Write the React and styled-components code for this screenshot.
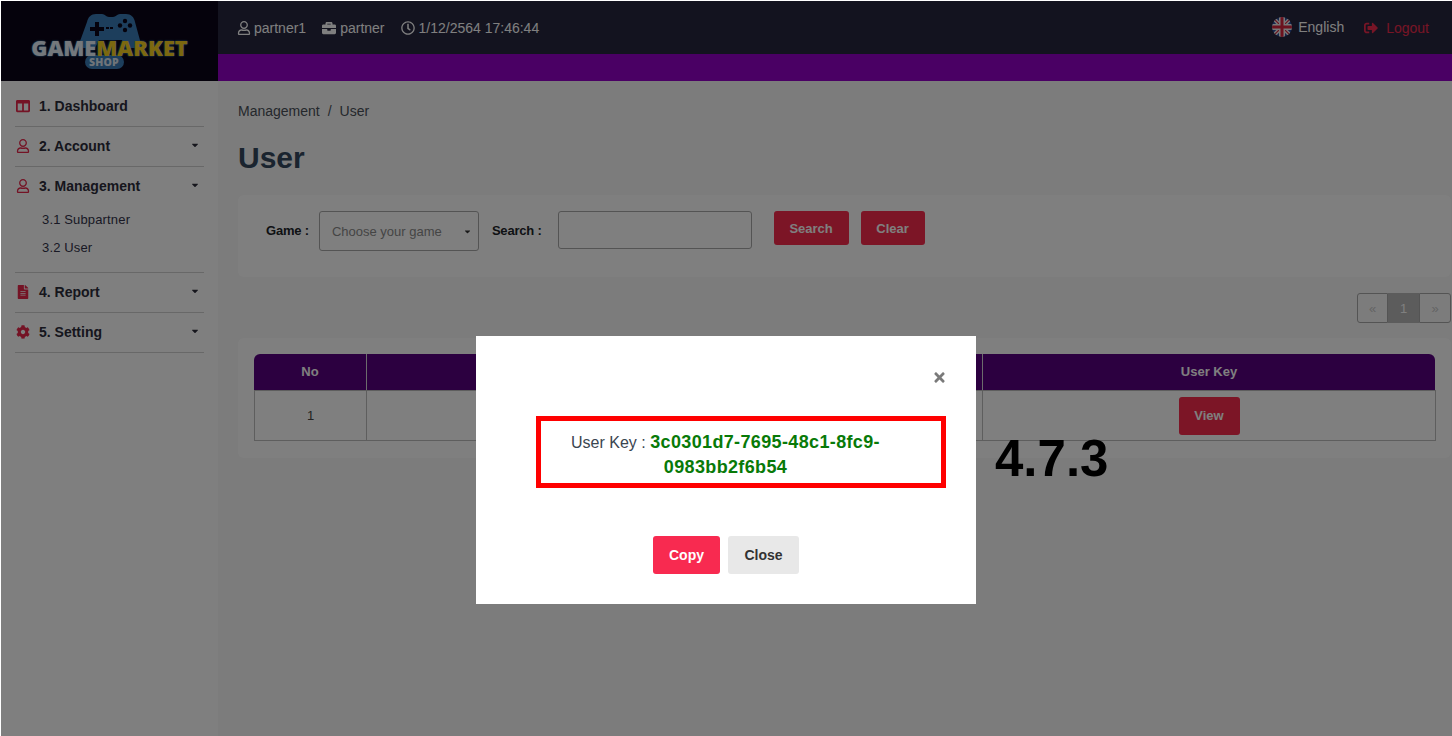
import React from "react";
import styled, { createGlobalStyle } from "styled-components";
import { FaRegUser, FaBriefcase, FaRegClock, FaSignOutAlt, FaColumns, FaFileAlt, FaCog, FaCaretDown, FaTimes } from "react-icons/fa";

const Global = createGlobalStyle`
  html, body { margin: 0; padding: 0; height: 100%; overflow: hidden; }
  body { font-family: "Liberation Sans", Arial, sans-serif; background: #fafafa; color: #212529; }
  * { box-sizing: border-box; }
`;
const Page = styled.div`
  position: relative; width: 1452px; height: 736px; display: flex; flex-direction: column;
  border-top: 1px solid #fff; border-left: 1px solid #fff; overflow: hidden;
`;
const Top = styled.header`display: flex; height: 80px; flex: none;`;
const LogoBox = styled.div`
  width: 217px; flex: none; background: #0a0518; display: flex; align-items: center; justify-content: center;
`;
const Logo = styled.div`position: relative; width: 160px; height: 58px; display: flex; flex-direction: column; align-items: center;`;
const LogoPad = styled.svg`position: absolute; top: 2px; left: 48px; width: 65px; height: 34px;`;
const LogoWords = styled.div`
  position: absolute; top: 30px; left: 0; width: 160px; text-align: center; white-space: nowrap;
  font: 800 21.8px "Open Sans", "Liberation Sans", sans-serif; line-height: 11px;
  text-shadow: 0 0 2px #3b82c0, 0 0 1px #3b82c0;
`;
const Word = styled.span`color: ${p => p.$c};`;
const LogoShop = styled.div`
  position: absolute; top: 43px; left: 55px; width: 39px; height: 14px; border-radius: 7px; background: #3a7cb8;
  color: #dfe8f2; font: 800 10.5px/15px "Open Sans", sans-serif; text-align: center; letter-spacing: .2px;
`;
const TopRight = styled.div`flex: 1; display: flex; flex-direction: column;`;
const InfoBar = styled.div`
  height: 53px; background: #26263e; display: flex; align-items: center; padding: 0 23px 0 19px; color: #fff; font-size: 14px; gap: 16px;
`;
const Info = styled.span`display: inline-flex; align-items: center; gap: ${p => p.$g || 4}px; svg { font-size: 14px; }`;
const Spacer = styled.div`flex: 1;`;
const Lang = styled.span`display: inline-flex; align-items: center; gap: 6px; margin-right: 4px; margin-top: -1px;`;
const Logout = styled.span`display: inline-flex; align-items: center; gap: 8px; color: #ee2a4c; margin-top: 1px; svg { font-size: 14px; }`;
const PurpleBar = styled.div`height: 27px; background: #9400c8;`;

const Body = styled.div`flex: 1; display: flex; min-height: 0;`;
const Side = styled.aside`width: 217px; flex: none; background: #ffffff; padding: 6px 14px 0;`;
const MenuRow = styled.div`
  height: 39px; display: flex; align-items: center; font-size: 14px; font-weight: 700; color: #2c2c3a; padding-bottom: 2px;
`;
const MenuIcon = styled.span`width: 24px; flex: none; display: flex; color: #e8274a; font-size: 14px; padding-left: 1px;`;
const MenuCaret = styled.span`margin-left: auto; font-size: 10px; display: flex; padding-right: 4px; margin-top: -1px; color: #2c2c3a;`;
const MenuGroup = styled.div`border-bottom: 1px solid #d0d0d0;`;
const SubList = styled.div`display: flex; flex-direction: column; margin-top: -1px; padding: 0 0 11px 27px;`;
const SubItem = styled.div`height: 28px; display: flex; align-items: center; font-size: 13px; letter-spacing: .15px; color: #33334a;`;

const Main = styled.main`flex: 1; background: #f9f9f9; padding: 21px 1px 0 20px; min-width: 0;`;
const Crumbs = styled.div`font-size: 14px; color: #4a5058; display: flex; gap: 8px; line-height: 18px;`;
const Title = styled.h1`margin: 20px 0 19px; font-size: 30px; line-height: 36px; font-weight: 700; color: #34495e;`;
const Card = styled.section`background: #ffffff; border-radius: 6px;`;
const Filter = styled(Card)`height: 82px; padding: 16px 28px 0; display: flex; align-items: flex-start; font-size: 13px;`;
const Label = styled.label`font-weight: 700; color: #212529; margin: 12px ${p => p.$mr}px 0 0; line-height: 15px; white-space: nowrap; letter-spacing: -.2px;`;
const Select = styled.div`
  width: 160px; height: 40px; border: 1px solid #a8a8a8; border-radius: 3px; color: #8a8a8a; display: flex; align-items: center;
  padding: 0 6px 0 12px; justify-content: space-between; margin-right: 13px; font-size: 13px;
  svg { font-size: 9px; color: #333; }
`;
const TextInput = styled.div`width: 194px; height: 38px; border: 1px solid #a8a8a8; border-radius: 3px; margin-right: 22px;`;
const RedBtn = styled.button`
  height: ${p => p.$h || 34}px; width: ${p => p.$w}px; margin-left: ${p => p.$ml || 0}px; background: #f82a4c; border: none; border-radius: 3px; color: #fff;
  font: 700 13px "Liberation Sans", sans-serif; padding: 0;
`;
const PagerRow = styled.div`display: flex; justify-content: flex-end; margin: 16px 0 15px 0; height: 30px;`;
const PagerCell = styled.div`
  width: ${p => p.$w}px; height: 30px; display: flex; align-items: center; justify-content: center; font-size: 13px;
  color: ${p => p.$on ? "#fff" : "#c8c8c8"}; background: ${p => p.$on ? "#b8b8b8" : "transparent"};
  border: ${p => p.$on ? "none" : "1px solid #a8a8a8"};
  border-radius: ${p => p.$r};
`;
const TableCard = styled(Card)`padding: 16px; height: 120px;`;
const TableHead = styled.div`display: grid; grid-template-columns: 113px 1fr 452px; height: 36px; background: #580080; border-radius: 6px 6px 0 0; color: #fff; font-size: 13px; font-weight: 700;`;
const TH = styled.div`display: flex; align-items: center; justify-content: center; border-right: ${p => p.$last ? "none" : "1px solid #d8d8d8"}; padding-bottom: 2px;`;
const TableRow = styled.div`display: grid; grid-template-columns: 112px 1fr 452px; height: 51px; margin-right: -1px; border: 1px solid #bdbdbd; font-size: 13px; color: #444;`;
const TD = styled.div`display: flex; align-items: center; justify-content: center; border-right: ${p => p.$last ? "none" : "1px solid #bdbdbd"};`;

const Overlay = styled.div`position: absolute; inset: -1px 0 0 -1px; background: rgba(0,0,0,.5); display: flex; justify-content: center; align-items: flex-start;`;
const Modal = styled.div`
  margin-top: 336px; width: 500px; height: 268px; background: #fff; padding: 31px 30px 0 60px; display: flex; flex-direction: column; position: relative;
`;
const CloseX = styled.button`align-self: flex-end; border: none; background: none; padding: 0; color: #7a7a7a; height: 20px; display: flex; align-items: center; font-size: 15px; margin: 0 0 29px; transform: translateX(1px);`;
const KeyBox = styled.div`
  width: 410px; height: 72px; border: 5px solid #ff0000; padding: 9px 51px 0 20px; text-align: center; font-size: 16px; line-height: 25px; color: #3a4550;
`;
const KeyValue = styled.b`color: #087a08; font-weight: 700; font-size: 18px; letter-spacing: .36px;`;
const ModalBtns = styled.div`display: flex; gap: 8px; justify-content: center; margin: 48px 0 0 -30px;`;
const ModalBtn = styled.button`
  width: ${p => p.$w}px; height: 38px; border: none; border-radius: 3px; background: ${p => p.$bg}; color: ${p => p.$c};
  font: 700 14px "Liberation Sans", sans-serif; padding: 0;
`;
const Version = styled.div`position: absolute; left: 995px; top: 430px; font-size: 51px; line-height: 58px; font-weight: 700; color: #000;`;

const Flag = () => (
  <svg width="20" height="20" viewBox="0 0 20 20">
    <defs><clipPath id="fc"><circle cx="10" cy="10" r="10" /></clipPath></defs>
    <g clipPath="url(#fc)">
      <rect width="20" height="20" fill="#2b4d9a" />
      <path d="M0 0L20 20M20 0L0 20" stroke="#eee" strokeWidth="4" />
      <path d="M0 0L20 20M20 0L0 20" stroke="#d8243c" strokeWidth="1.2" />
      <path d="M10 0V20M0 10H20" stroke="#eee" strokeWidth="6" />
      <path d="M10 0V20M0 10H20" stroke="#d8243c" strokeWidth="3" />
    </g>
  </svg>
);

const menu = [
  { t: "1. Dashboard", i: <FaColumns /> },
  { t: "2. Account", i: <FaRegUser />, c: 1 },
  { t: "3. Management", i: <FaRegUser />, c: 1, sub: ["3.1 Subpartner", "3.2 User"] },
  { t: "4. Report", i: <FaFileAlt />, c: 1 },
  { t: "5. Setting", i: <FaCog />, c: 1 },
];

export default function App() {
  return (
    <>
      <Global />
      <Page>
        <Top>
          <LogoBox>
            <Logo>
              <LogoPad viewBox="0 0 65 34">
                <path d="M18 0h6c3 0 4 3 7 3h4c3 0 4-3 7-3h6c5 0 8 3 9 8l6 22c0 4-2 4-5 4H48l-4-8H21l-4 8H6c-3 0-5 0-5-4L9 8c1-5 4-8 9-8z" fill="#3a7cb8" />
                <path d="M17 8h4v5h5v4h-5v5h-4v-5h-5v-4h5z" fill="#0a0518" />
                <circle cx="47" cy="7" r="2.2" fill="#0a0518" /><circle cx="47" cy="16" r="2.200" fill="#0a0518" />
                <circle cx="42" cy="11.500" r="2.200" fill="#0a0518" /><circle cx="52" cy="11.500" r="2.200" fill="#0a0518" />
                <path d="M28 13h3v2h-3zM32 13h3v2h-3z" fill="#0a0518" />
              </LogoPad>
              <LogoShop>SHOP</LogoShop>
              <LogoWords><Word $c="#e8f0f8">GAME</Word><Word $c="#f8d020">MARKET</Word></LogoWords>
            </Logo>
          </LogoBox>
          <TopRight>
            <InfoBar>
              <Info $g={3}><FaRegUser />partner1</Info>
              <Info><FaBriefcase />partner</Info>
              <Info><FaRegClock />1/12/2564 17:46:44</Info>
              <Spacer />
              <Lang><Flag />English</Lang>
              <Logout><FaSignOutAlt />Logout</Logout>
            </InfoBar>
            <PurpleBar />
          </TopRight>
        </Top>
        <Body>
          <Side>
            {menu.map(m => (
              <MenuGroup key={m.t}>
                <MenuRow>
                  <MenuIcon>{m.i}</MenuIcon>
                  {m.t}
                  {m.c && <MenuCaret><FaCaretDown /></MenuCaret>}
                </MenuRow>
                {m.sub && <SubList>{m.sub.map(s => <SubItem key={s}>{s}</SubItem>)}</SubList>}
              </MenuGroup>
            ))}
          </Side>
          <Main>
            <Crumbs><span>Management</span><span>/</span><span>User</span></Crumbs>
            <Title>User</Title>
            <Filter>
              <Label $mr={10}>Game :</Label>
              <Select>Choose your game<FaCaretDown /></Select>
              <Label $mr={16}>Search :</Label>
              <TextInput />
              <RedBtn $w={75}>Search</RedBtn>
              <RedBtn $w={64} $ml={12}>Clear</RedBtn>
            </Filter>
            <PagerRow>
              <PagerCell $w={31} $r="3px 0 0 3px">«</PagerCell>
              <PagerCell $w={31} $on $r="0">1</PagerCell>
              <PagerCell $w={32} $r="0 3px 3px 0">»</PagerCell>
            </PagerRow>
            <TableCard>
              <TableHead>
                <TH>No</TH><TH>User</TH><TH $last>User Key</TH>
              </TableHead>
              <TableRow>
                <TD>1</TD><TD>partner1</TD>
                <TD $last><RedBtn $w={61} $h={38}>View</RedBtn></TD>
              </TableRow>
            </TableCard>
          </Main>
        </Body>
        <Overlay>
          <Modal>
            <CloseX><FaTimes /></CloseX>
            <KeyBox>User Key : <KeyValue>3c0301d7-7695-48c1-8fc9-0983bb2f6b54</KeyValue></KeyBox>
            <ModalBtns>
              <ModalBtn $w={67} $bg="#f82a50" $c="#fff">Copy</ModalBtn>
              <ModalBtn $w={71} $bg="#e8e8e8" $c="#333">Close</ModalBtn>
            </ModalBtns>
          </Modal>
          <Version>4.7.3</Version>
        </Overlay>
      </Page>
    </>
  );
}
